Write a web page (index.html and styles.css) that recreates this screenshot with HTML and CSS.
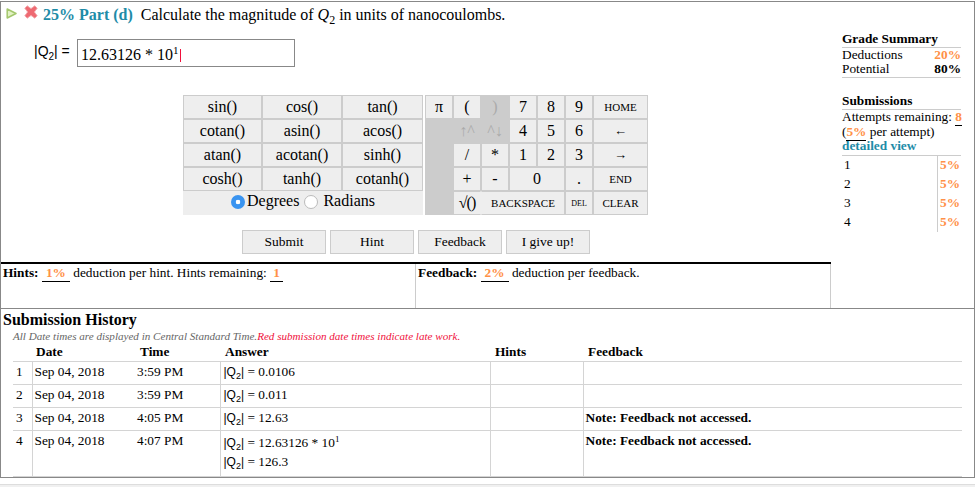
FILE: index.html
```html
<!DOCTYPE html>
<html lang="en">
<head>
  <meta charset="UTF-8" />
  <title>Part (d)</title>
  <link rel="stylesheet" href="styles.css">
</head>
<body>
  <div class="panel">
    <div class="top">
      <div class="main">
        <div class="part-title">
          <svg class="icon-play" width="11" height="11" viewBox="0 0 11 11"><path d="M1.2 1 L10 5.5 L1.2 10 Z" fill="#e2f2c4" stroke="#a3c76c" stroke-width="1.5" stroke-linejoin="round"/></svg>
          <svg class="icon-x" width="14" height="14" viewBox="0 0 14 14"><path d="M3.2 .8 L7 3.6 L10.8 .8 L13.2 3.2 L10.4 7 L13.2 10.8 L10.8 13.2 L7 10.4 L3.2 13.2 L.8 10.8 L3.6 7 L.8 3.2 Z" fill="#ee6a72" stroke="#f2a9ad" stroke-width="1" stroke-linejoin="round"/></svg>
          <b class="teal">25% Part (d)</b>
          <span class="question">Calculate the magnitude of <i>Q</i><sub>2</sub> in units of nanocoulombs.</span>
        </div>

        <div class="answer-row">
          <span class="answer-label">|Q<sub>2</sub>| =</span>
          <div class="answer-box">12.63126 * 10<sup>1</sup><span class="caret"></span></div>
        </div>

        <div class="calc">
          <div class="funcs">
            <div class="key">sin()</div><div class="key">cos()</div><div class="key">tan()</div>
            <div class="key">cotan()</div><div class="key">asin()</div><div class="key">acos()</div>
            <div class="key">atan()</div><div class="key">acotan()</div><div class="key">sinh()</div>
            <div class="key">cosh()</div><div class="key">tanh()</div><div class="key">cotanh()</div>
            <div class="angle">
              <span class="radio on"></span>Degrees
              <span class="radio"></span>Radians
            </div>
          </div>
          <div class="pad">
            <div class="key">π</div><div class="key">(</div><div class="key off">)</div><div class="key">7</div><div class="key">8</div><div class="key">9</div><div class="key small">HOME</div>
            <div class="key off"></div><div class="key off">↑^</div><div class="key off">^↓</div><div class="key">4</div><div class="key">5</div><div class="key">6</div><div class="key arrow">←</div>
            <div class="key off"></div><div class="key">/</div><div class="key">*</div><div class="key">1</div><div class="key">2</div><div class="key">3</div><div class="key arrow">→</div>
            <div class="key off"></div><div class="key">+</div><div class="key">-</div><div class="key span2">0</div><div class="key">.</div><div class="key small">END</div>
            <div class="key off"></div><div class="key sqrt">√()</div><div class="key small span3 backspace">BACKSPACE</div><div class="key tiny">DEL</div><div class="key small">CLEAR</div>
          </div>
        </div>

        <div class="actions">
          <div class="btn">Submit</div>
          <div class="btn">Hint</div>
          <div class="btn">Feedback</div>
          <div class="btn">I give up!</div>
        </div>

        <div class="notes">
          <div class="note note-hints"><b>Hints:</b> <b class="score pad4">1%</b> deduction per hint. Hints remaining: <b class="score pad3">1</b></div>
          <div class="note note-feedback"><b>Feedback:</b> <b class="score pad4">2%</b> deduction per feedback.</div>
        </div>
      </div>

      <div class="side">
        <div class="side-head">Grade Summary</div>
        <div class="side-row">Deductions <b class="orange">20%</b></div>
        <div class="side-row side-last">Potential <b>80%</b></div>

        <div class="side-head side-second">Submissions</div>
        <div class="attempts">
          Attempts remaining: <b class="score">8</b><br>
          (<b class="score">5%</b> per attempt)<br>
          <b class="teal">detailed view</b>
        </div>
        <div class="subs">
          <div class="sub-row"><span>1</span><b class="orange">5%</b></div>
          <div class="sub-row"><span>2</span><b class="orange">5%</b></div>
          <div class="sub-row"><span>3</span><b class="orange">5%</b></div>
          <div class="sub-row"><span>4</span><b class="orange">5%</b></div>
        </div>
      </div>
    </div>

    <div class="history">
      <h2>Submission History</h2>
      <p class="legend"><i>All Date times are displayed in Central Standard Time.</i><i class="red">Red submission date times indicate late work.</i></p>
      <table>
        <colgroup>
          <col class="c-num"><col class="c-date"><col class="c-time"><col class="c-ans"><col class="c-hints"><col class="c-fb">
        </colgroup>
        <tr>
          <th></th><th class="th-date">Date</th><th class="th-time">Time</th><th class="th-ans">Answer</th><th class="th-hints">Hints</th><th class="th-fb">Feedback</th>
        </tr>
        <tr>
          <td class="num">1</td><td class="date">Sep 04, 2018</td><td class="time">3:59 PM</td><td class="ans"><span class="sans">|Q<sub>2</sub>|</span> = 0.0106</td><td class="bl"></td><td class="bl"></td>
        </tr>
        <tr>
          <td class="num">2</td><td class="date">Sep 04, 2018</td><td class="time">3:59 PM</td><td class="ans"><span class="sans">|Q<sub>2</sub>|</span> = 0.011</td><td class="bl"></td><td class="bl"></td>
        </tr>
        <tr>
          <td class="num">3</td><td class="date">Sep 04, 2018</td><td class="time">4:05 PM</td><td class="ans"><span class="sans">|Q<sub>2</sub>|</span> = 12.63</td><td class="bl"></td><td class="bl"><b>Note: Feedback not accessed.</b></td>
        </tr>
        <tr class="tall">
          <td class="num">4</td><td class="date">Sep 04, 2018</td><td class="time">4:07 PM</td>
          <td class="ans">
            <div class="ans-line"><span class="sans">|Q<sub>2</sub>|</span> = 12.63126 * 10<sup>1</sup></div>
            <div class="ans-line"><span class="sans">|Q<sub>2</sub>|</span> = 126.3</div>
          </td>
          <td class="bl"></td><td class="bl"><b>Note: Feedback not accessed.</b></td>
        </tr>
      </table>
    </div>
  </div>
  <div class="footer-strip"></div>
</body>
</html>
```

FILE: styles.css
```css
html, body {
  margin: 0;
  padding: 0;
  height: 487px;
  overflow: hidden;
  background: #fff;
}

body {
  font-family: "Liberation Serif", "Times New Roman", serif;
  font-size: 13.33px;
  color: #000;
}

sub, sup {
  line-height: 0;
}

.panel {
  margin-top: 1px;
  width: 973px;
  height: 475px;
  border: 1px solid #888;
}

.top {
  display: flex;
  height: 306px;
  border-bottom: 1px solid #888;
}

.main {
  width: 830px;
  display: flex;
  flex-direction: column;
}

.teal { color: #1e8ca8; }
.orange { color: #ff9147; }
.red { color: #f0103c; }

.part-title {
  display: flex;
  align-items: center;
  height: 18px;
  margin-top: 4px;
  padding-left: 5px;
  font-size: 16px;
  white-space: pre;
}

.part-title b {
  margin-right: 8px;
}

.part-title sub {
  font-size: 12px;
}

.icon-play {
  margin-right: 7px;
  margin-top: -3px;
}

.icon-x {
  margin-right: 5px;
  margin-top: -6px;
}

.answer-row {
  display: flex;
  align-items: center;
  margin-top: 15px;
  padding-left: 33px;
}

.answer-label {
  font-family: "Liberation Sans", Arial, sans-serif;
  font-size: 14px;
  width: 43px;
  margin-top: -5px;
}

.answer-label sub {
  font-size: 10px;
}

.answer-box {
  height: 26px;
  line-height: 29px;
  border: 1px solid #888;
  padding-left: 3px;
  width: 213px;
  font-size: 16px;
}

.answer-box sup {
  font-size: 11px;
}

.caret {
  display: inline-block;
  width: 1px;
  height: 13px;
  background: #f0103c;
  margin-left: 1px;
  vertical-align: -2px;
}

.calc {
  display: flex;
  gap: 2px;
  margin-top: 28px;
  margin-left: 182px;
}

.funcs {
  display: grid;
  grid-template-columns: 79px 80px 81px;
  grid-auto-rows: 24px;
  width: 240px;
}

.key {
  display: flex;
  align-items: center;
  justify-content: center;
  background: #eee;
  border: 1px solid #ccc;
  font-size: 16px;
}

.angle {
  grid-column: span 3;
  display: flex;
  align-items: center;
  justify-content: center;
  background: #eee;
  font-size: 16px;
  padding-bottom: 5px;
  box-sizing: border-box;
}

.radio {
  width: 12px;
  height: 12px;
  border: 1px solid #bbb;
  border-radius: 50%;
  background: #fff;
  margin: 2px 5px 0 5px;
}

.radio.on {
  width: 14px;
  height: 14px;
  margin: 2px 2px 0 0;
  border: 0;
  background: radial-gradient(circle, #fff 0 2px, #3a94f0 2.6px);
}

.pad {
  display: grid;
  grid-template-columns: repeat(6, 28px) 55px;
  grid-auto-rows: 24px;
}

.key.off {
  background: #ccc;
  color: #aaa;
}

.key.small { font-size: 11px; }
.key.tiny { font-size: 8px; }
.key.arrow { font-size: 13px; }
.key.sqrt { letter-spacing: -1px; border-right-color: #eee; }
.key.backspace { border-left-color: #eee; }
.span2 { grid-column: span 2; }
.span3 { grid-column: span 3; }

.actions {
  display: flex;
  gap: 4px;
  margin-top: 15px;
  margin-left: 241px;
}

.btn {
  width: 82px;
  height: 22px;
  line-height: 22px;
  text-align: center;
  background: #eee;
  border: 1px solid #ccc;
  font-size: 13.5px;
}

.notes {
  display: flex;
  margin-top: 8px;
  border-top: 2px solid #000;
  flex: 1;
}

.note {
  padding: 1px 2px;
}

.note-hints {
  width: 410px;
  border-right: 1px solid #ccc;
}

.note-feedback {
  flex: 1;
  border-right: 1px solid #ccc;
}

.score {
  color: #ff9147;
  border-bottom: 1px solid #000;
  padding-bottom: 1px;
}

.pad4 { padding-left: 4px; padding-right: 4px; }
.pad3 { padding-left: 3px; padding-right: 3px; }

.side {
  width: 119px;
  margin-left: 11px;
  padding-top: 30px;
}

.side-head {
  font-weight: bold;
  line-height: 14px;
  border-bottom: 1px solid #ccc;
  padding-bottom: 1px;
}

.side-second {
  margin-top: 16px;
}

.side-row {
  display: flex;
  justify-content: space-between;
  line-height: 14px;
}

.side-last {
  border-bottom: 1px solid #ccc;
  padding-bottom: 1px;
}

.attempts {
  line-height: 14.5px;
  white-space: nowrap;
  border-bottom: 1px solid #ccc;
  padding-bottom: 1px;
}

.sub-row {
  display: flex;
  justify-content: space-between;
  height: 19px;
  line-height: 18px;
  padding-left: 2px;
}

.sub-row b {
  width: 24px;
  padding-left: 2px;
  box-sizing: border-box;
  border-left: 1px solid #ccc;
}

.history {
  padding-left: 2px;
}

h2 {
  margin: 2px 0 0;
  font-size: 16px;
  line-height: 18px;
}

.legend {
  margin: 0 0 0 10px;
  font-size: 11.1px;
  line-height: 14px;
  color: #666;
}

table {
  border-collapse: collapse;
  table-layout: fixed;
  width: 949px;
  margin-left: 10px;
}

.c-num { width: 19px; }
.c-date { width: 103px; }
.c-time { width: 85px; }
.c-ans { width: 270px; }
.c-hints { width: 93px; }
.c-fb { width: 379px; }

th {
  height: 18px;
  padding: 0;
  text-align: left;
  font-size: 13.33px;
}

.th-date { padding-left: 4px; }
.th-time { padding-left: 5px; }
.th-ans { padding-left: 5px; }
.th-hints { padding-left: 5px; }
.th-fb { padding-left: 5px; }

td {
  height: 22px;
  padding: 0 2px;
  border-top: 1px solid #d4d4d4;
  border-bottom: 1px solid #d4d4d4;
  vertical-align: top;
  line-height: 20px;
  white-space: nowrap;
}

.tall td {
  height: 43px;
}

.num {
  padding-left: 3px;
}

.date, .ans, .bl {
  border-left: 1px solid #d4d4d4;
}

.ans {
  padding-left: 3px;
}

.tall .ans {
  padding-top: 2px;
}

.ans-line {
  height: 19px;
  line-height: 19px;
}

.sans {
  font-family: "Liberation Sans", Arial, sans-serif;
  font-size: 12px;
}

.sans sub {
  font-size: 9px;
}

td sup {
  font-size: 9px;
}

.footer-strip {
  margin-top: 6px;
  border-top: 1px solid #ddd;
  height: 9px;
  background: #f0f0f0;
}
```
